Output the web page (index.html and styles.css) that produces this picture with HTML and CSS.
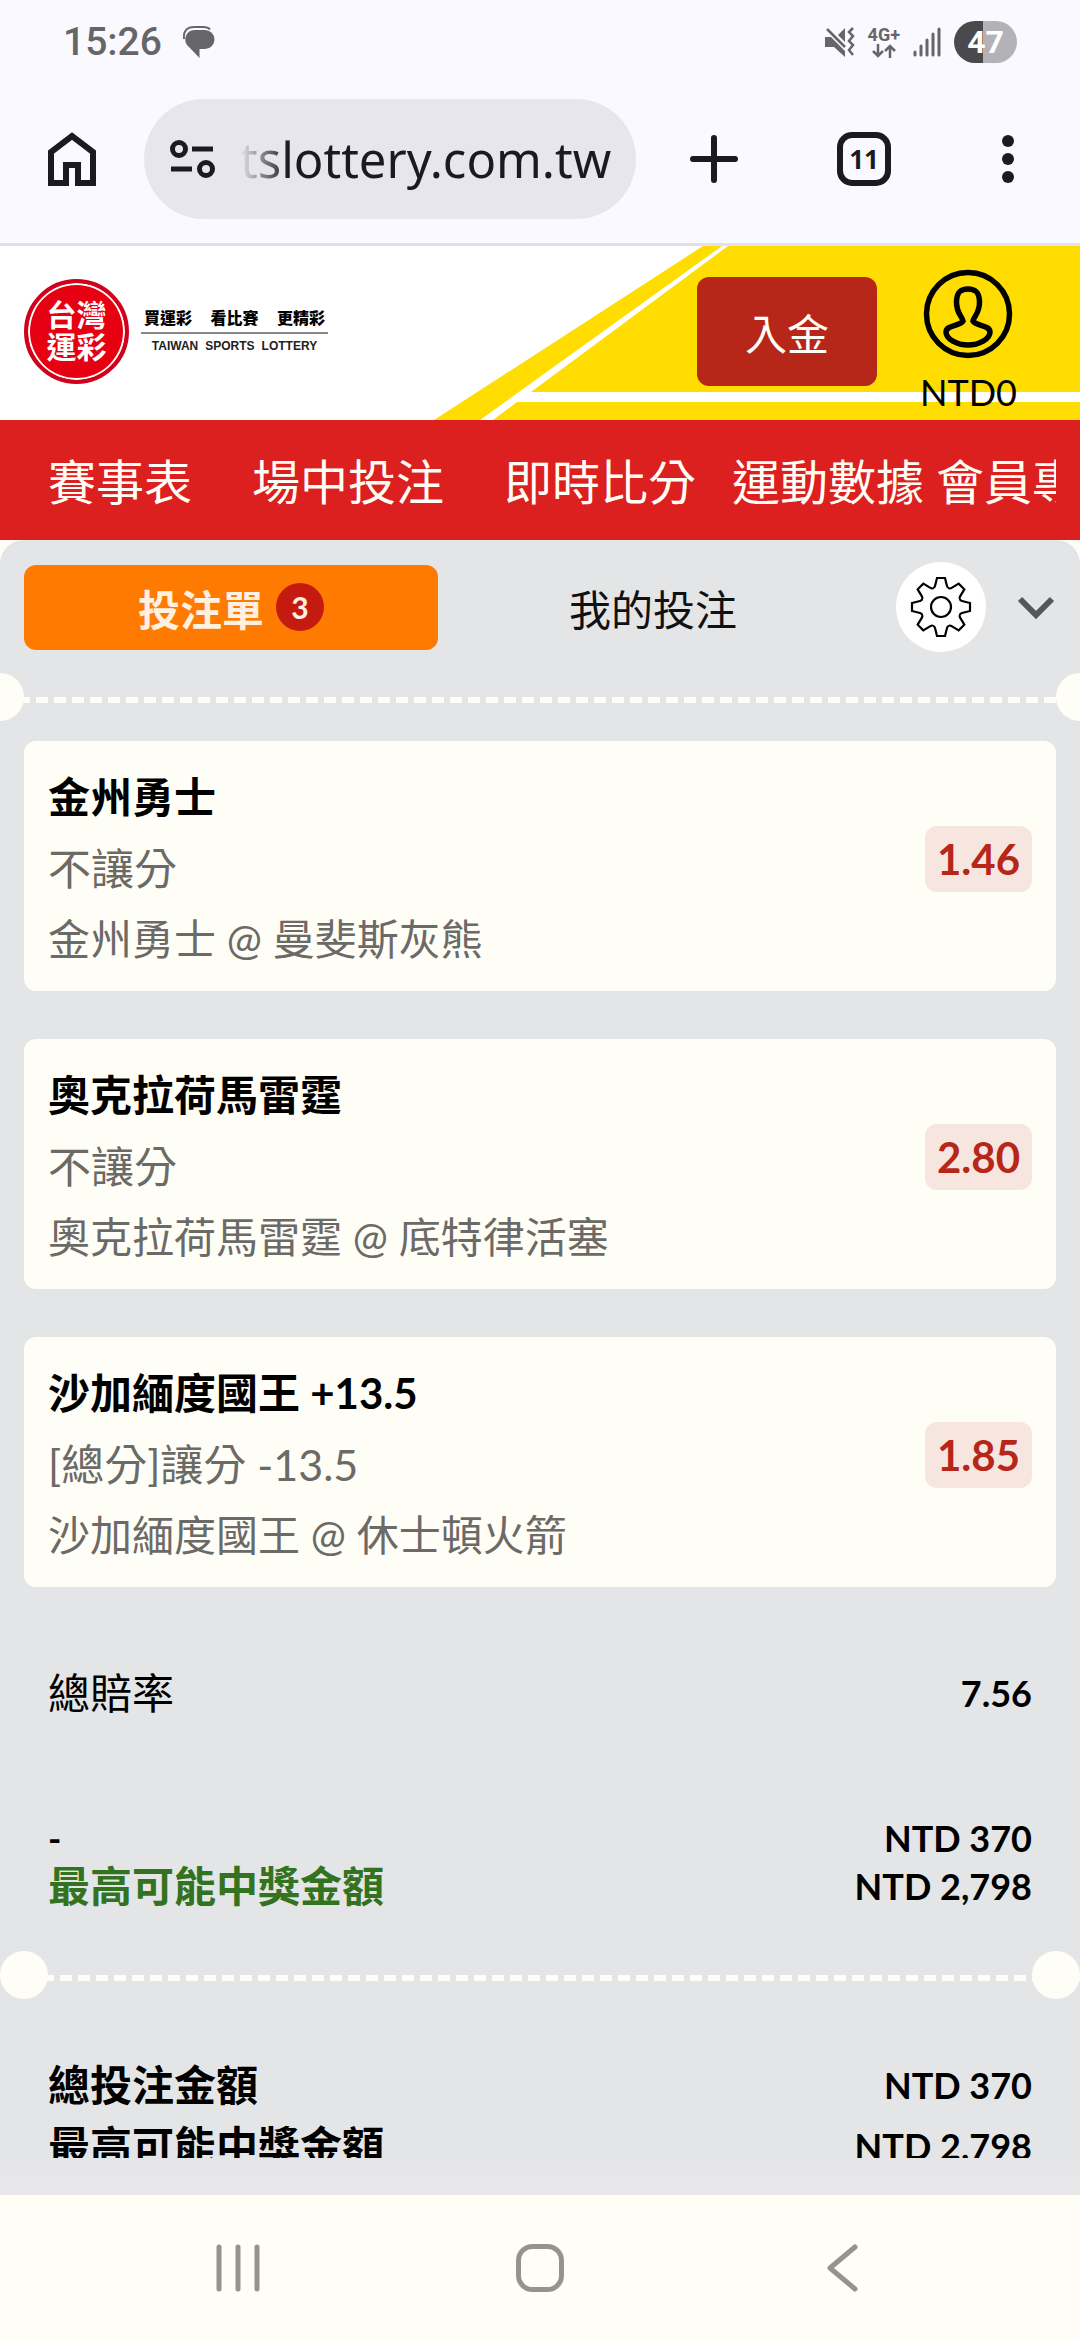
FILE: index.html
```html
<!DOCTYPE html>
<html lang="zh-Hant">

<head>
    <meta charset="UTF-8">
    <meta name="viewport" content="width=device-width, initial-scale=1.0">
    <title>台灣運彩 投注單</title>
    <link rel="stylesheet" href="styles.css">
</head>

<body>
    <!-- 系統狀態列 -->
    <div class="status-bar">
        <span class="time">15:26</span>
        <svg class="icon-message" viewBox="0 0 32 32" width="32" height="32">
            <path d="M12 4H22a9.500 9.500 0 0 1 0 19H16.500V32L6 21A9.500 9.500 0 0 1 12 4Z" fill="#666568" />
            <path d="M1 13C0 4 5 1 11 1H20Q25 1 27 3.500" fill="none" stroke="#666568" stroke-width="2" />
        </svg>
        <div class="status-icons">
            <svg viewBox="0 0 30 30" width="30" height="30">
                <path d="M0 10H6L20 24V30L9 20H0ZM13 8L20 1V15Z" fill="#666568" />
                <path d="M2 2L20 20M28 1L24 5L28 9L24 14L28 18L24 23L28 28" fill="none" stroke="#666568" stroke-width="2.500" />
            </svg>
            <div class="network">
                <span>4G+</span>
                <svg viewBox="0 0 24 14" width="24" height="14">
                    <path d="M6 0V12M1 7L6 12L11 7M18 14V2M13 7L18 2L23 7" fill="none" stroke="#666568" stroke-width="2.500" />
                </svg>
            </div>
            <svg class="signal" viewBox="0 0 28 30" width="28" height="30">
                <path d="M2 25V28M8 19V28M14 13V28M20 7V28M26 2V28" stroke="#666568" stroke-width="3" stroke-linecap="round" />
            </svg>
            <span class="battery">47</span>
        </div>
    </div>

    <!-- 瀏覽器工具列 -->
    <div class="toolbar">
        <button class="tool" aria-label="首頁">
            <svg viewBox="0 0 48 54" width="48" height="54">
                <path d="M3 51V20L24 4L45 20V51H30V33H18V51Z" fill="none" stroke="#1a1a1f" stroke-width="6" />
            </svg>
        </button>
        <div class="address">
            <svg viewBox="0 0 46 38" width="46" height="38">
                <g fill="none" stroke="#1a1a1f" stroke-width="5">
                    <circle cx="9" cy="9" r="6.500" />
                    <circle cx="36" cy="29" r="6.500" />
                    <path d="M22 9H43M1 29H22" />
                </g>
            </svg>
            <input class="url" type="text" value="tslottery.com.tw" aria-label="網址">
        </div>
        <button class="tool" aria-label="新分頁">
            <svg viewBox="0 0 48 48" width="48" height="48">
                <path d="M24 3V45M3 24H45" stroke="#1a1a1f" stroke-width="6" stroke-linecap="round" />
            </svg>
        </button>
        <button class="tool tabs" aria-label="分頁">11</button>
        <button class="tool" aria-label="選單">
            <svg viewBox="0 0 12 48" width="12" height="48">
                <g fill="#1a1a1f">
                    <circle cx="6" cy="6" r="6" />
                    <circle cx="6" cy="24" r="6" />
                    <circle cx="6" cy="42" r="6" />
                </g>
            </svg>
        </button>
    </div>

    <!-- 網站頁首 -->
    <header class="site-header">
        <!-- 黃色斜線背景 -->
        <svg class="header-bg" viewBox="0 0 646 174" width="646" height="174">
            <path d="M0 174L269 0H646V174Z" fill="#ffdd00" />
            <path d="M46 174L288 0H294L97 146H646V156H83L59 174Z" fill="#fff" />
        </svg>
        <a class="logo" href="#">
            <span class="logo-mark">台灣<br>運彩</span>
            <span class="logo-text">
                <span class="slogan"><span>買運彩</span><span>看比賽</span><span>更精彩</span></span>
                <span class="english"><span>TAIWAN</span><span>SPORTS</span><span>LOTTERY</span></span>
            </span>
        </a>
        <button class="deposit">入金</button>
        <a class="account" href="#">
            <svg viewBox="0 0 90 90" width="90" height="90">
                <g fill="none" stroke="#000" stroke-width="5.500">
                    <circle cx="45" cy="45" r="41.500" />
                    <path d="M40 52C39 47 33 44 33.500 32C34 22 39 20 45 20C51 20 56 22 56.500 32C57 44 51 47 50 52C53 57 67 56 67 63C67 70 56 76 45 76C34 76 23 70 23 63C23 56 37 57 40 52Z" />
                </g>
            </svg>
            <span>NTD0</span>
        </a>
    </header>

    <!-- 主選單 -->
    <nav class="main-nav">
        <div class="nav-list">
            <a href="#">賽事表</a>
            <a href="#">場中投注</a>
            <a href="#">即時比分</a>
            <a href="#">運動數據</a>
            <a href="#">會員專區</a>
        </div>
    </nav>

    <!-- 投注單 -->
    <main class="slip-wrap">
        <div class="slip">
            <div class="slip-head">
                <button class="tab active">投注單 <span class="count">3</span></button>
                <button class="tab">我的投注</button>
                <button class="gear" aria-label="設定">
                    <svg viewBox="-32 -32 64 64" width="64" height="64">
                        <defs>
                            <path id="tooth" d="M-8 -19Q-6.500 -19 -6 -21L-4 -29H4L6 -21Q6.500 -19 8 -19" />
                        </defs>
                        <g fill="none" stroke="#000" stroke-width="2.200">
                            <use href="#tooth" />
                            <use href="#tooth" transform="rotate(45)" />
                            <use href="#tooth" transform="rotate(90)" />
                            <use href="#tooth" transform="rotate(135)" />
                            <use href="#tooth" transform="rotate(180)" />
                            <use href="#tooth" transform="rotate(225)" />
                            <use href="#tooth" transform="rotate(270)" />
                            <use href="#tooth" transform="rotate(315)" />
                            <circle r="10" />
                        </g>
                    </svg>
                </button>
                <button class="collapse" aria-label="收合">
                    <svg viewBox="0 0 40 24" width="40" height="24">
                        <path d="M4 4L20 20L36 4" fill="none" stroke="#555759" stroke-width="6" />
                    </svg>
                </button>
            </div>

            <div class="divider outer"></div>

            <div class="bets">
                <article class="bet">
                    <div class="bet-info">
                        <h2>金州勇士</h2>
                        <p class="market">不讓分</p>
                        <p>金州勇士 @ 曼斐斯灰熊</p>
                    </div>
                    <span class="odds">1.46</span>
                </article>
                <article class="bet">
                    <div class="bet-info">
                        <h2>奧克拉荷馬雷霆</h2>
                        <p class="market">不讓分</p>
                        <p>奧克拉荷馬雷霆 @ 底特律活塞</p>
                    </div>
                    <span class="odds">2.80</span>
                </article>
                <article class="bet">
                    <div class="bet-info">
                        <h2>沙加緬度國王 +13.5</h2>
                        <p class="market">[總分]讓分 -13.5</p>
                        <p>沙加緬度國王 @ 休士頓火箭</p>
                    </div>
                    <span class="odds">1.85</span>
                </article>
            </div>

            <div class="row total-odds">
                <span>總賠率</span>
                <b>7.56</b>
            </div>
            <div class="stake">
                <div class="row"><b>-</b><b>NTD 370</b></div>
                <div class="row win"><span>最高可能中獎金額</span><b>NTD 2,798</b></div>
            </div>

            <div class="divider inner"></div>

            <div class="summary">
                <div class="row"><span>總投注金額</span><b>NTD 370</b></div>
                <div class="row"><span>最高可能中獎金額</span><b>NTD 2,798</b></div>
            </div>
        </div>
    </main>

    <!-- 系統導覽列 -->
    <div class="system-nav">
        <button aria-label="最近使用">
            <svg viewBox="0 0 48 48" width="48" height="48">
                <path d="M5 3V45M24 3V45M43 3V45" />
            </svg>
        </button>
        <button aria-label="主畫面">
            <svg viewBox="0 0 48 48" width="48" height="48">
                <rect x="2.500" y="2.500" width="43" height="43" rx="14" />
            </svg>
        </button>
        <button aria-label="返回">
            <svg viewBox="0 0 48 48" width="48" height="48">
                <path d="M37 3L12 24L37 45" />
            </svg>
        </button>
    </div>
</body>
</html>
```

FILE: styles.css
```css
* {
    box-sizing: border-box;
}

body {
    display: flex;
    flex-direction: column;
    height: 100vh;
    margin: 0;
    overflow: hidden;
    background-color: #faf9ff;
    color: #000;
    font-family: Lato, "Noto Sans CJK TC", sans-serif;
    font-size: 42px;
}

button {
    padding: 0;
    border: none;
    background: none;
    color: inherit;
    font-family: inherit;
    cursor: pointer;
}

a {
    color: inherit;
    text-decoration: none;
}

svg {
    display: block;
}

/* 系統狀態列 */
.status-bar {
    display: flex;
    flex: none;
    align-items: center;
    height: 84px;
    padding: 0 63px;
    color: #666568;
    font-family: Roboto, sans-serif;
}

.time {
    font-size: 39px;
    font-weight: 500;
}

.icon-message {
    margin-left: 21px;
}

.status-icons {
    display: flex;
    align-items: center;
    gap: 13px;
    margin-left: auto;
}

.network {
    display: flex;
    flex-direction: column;
    align-items: center;
    font-size: 18px;
    font-weight: 700;
    line-height: 18px;
}

.battery {
    width: 63px;
    height: 42px;
    border-radius: 21px;
    background: linear-gradient(90deg, #4a4a4c 46%, #b3b2b7 46%);
    color: #fff;
    font-size: 32px;
    font-weight: 700;
    line-height: 42px;
    text-align: center;
}

/* 瀏覽器工具列 */
.toolbar {
    display: flex;
    flex: none;
    align-items: center;
    height: 162px;
    padding: 0 66px 9px 48px;
    border-bottom: 3px solid #e2e1e9;
}

.tool {
    flex: none;
}

.address {
    display: flex;
    flex: 1;
    align-items: center;
    gap: 24px;
    min-width: 0;
    height: 120px;
    margin: 0 54px 0 48px;
    padding: 0 20px 0 26px;
    border-radius: 60px;
    background-color: #e7e6ed;
}

.address svg {
    flex: none;
}

.url {
    flex: 1;
    min-width: 0;
    padding: 0;
    border: none;
    outline: none;
    background: none;
    color: #1a1a1f;
    font-family: "Noto Sans", sans-serif;
    font-size: 49px;
    /* 網址左側淡出 */
    -webkit-mask-image: linear-gradient(90deg, transparent, #000 48px);
    mask-image: linear-gradient(90deg, transparent, #000 48px);
}

.tabs {
    width: 54px;
    height: 54px;
    margin: 0 111px 0 99px;
    border: 6px solid #1a1a1f;
    border-radius: 15px;
    color: #1a1a1f;
    font-family: "Noto Sans", sans-serif;
    font-size: 26px;
    font-weight: 700;
    line-height: 42px;
}

/* 網站頁首 */
.site-header {
    position: relative;
    display: flex;
    flex: none;
    align-items: flex-start;
    height: 174px;
    padding: 0 63px 0 24px;
    overflow: hidden;
    background-color: #fff;
}

.header-bg {
    position: absolute;
    top: 0;
    right: 0;
}

.logo {
    display: flex;
    align-items: center;
    gap: 12px;
    margin-top: 33px;
}

.logo-mark {
    width: 105px;
    height: 105px;
    padding-top: 15px;
    border: 4px solid #d0021b;
    border-radius: 50%;
    background-color: #e60012;
    box-shadow: inset 0 0 0 2px #fff;
    color: #fff;
    font-size: 30px;
    font-weight: 700;
    line-height: 32px;
    text-align: center;
}

.logo-text {
    width: 187px;
}

.slogan {
    display: flex;
    justify-content: space-between;
    padding: 0 3px 2px;
    border-bottom: 2px solid #888;
    font-size: 16px;
    font-weight: 900;
    line-height: 24px;
}

.english {
    display: flex;
    justify-content: center;
    gap: 7px;
    color: #222;
    font-family: "Liberation Sans", sans-serif;
    font-size: 12px;
    font-weight: 700;
    line-height: 24px;
}

.deposit {
    position: relative;
    width: 180px;
    height: 109px;
    margin: 31px 43px 0 auto;
    border-radius: 12px;
    background-color: #b62619;
    color: #fffdf5;
    font-size: 42px;
}

.account {
    position: relative;
    display: flex;
    flex-direction: column;
    align-items: center;
    padding-top: 23px;
    font-size: 36px;
    line-height: 66px;
}

/* 主選單 */
.main-nav {
    flex: none;
    padding: 4px 24px 0;
    background-color: #dc1f1f;
    color: #fffdf5;
}

.nav-list {
    display: flex;
    gap: 12px;
    padding-left: 24px;
    overflow: hidden;
    font-size: 48px;
    line-height: 116px;
    white-space: nowrap;
}

.nav-list a:nth-child(-n+2) {
    padding-right: 48px;
}

.nav-list a:nth-child(3) {
    padding-right: 24px;
}

/* 投注單外框 */
.slip-wrap {
    display: flex;
    flex: 1;
    flex-direction: column;
    min-height: 0;
    background-color: #fffef6;
}

.slip-wrap::after {
    content: "";
    flex: none;
    height: 37px;
    background: linear-gradient(#e4e5e7, #e9e9eb);
}

.slip {
    flex: 1;
    min-height: 0;
    overflow: hidden;
    border-radius: 24px 24px 0 0;
    background-color: #e4e5e7;
}

.slip-head {
    display: flex;
    align-items: center;
    padding: 22px 24px 21px;
}

.tab {
    display: flex;
    flex: 1;
    align-items: center;
    justify-content: center;
    gap: 12px;
    height: 85px;
    margin-right: 8px;
    border-radius: 12px;
    color: #111;
    font-size: 42px;
}

.tab.active {
    background-color: #ff7a00;
    color: #fff1e0;
    font-weight: 700;
}

.count {
    width: 48px;
    height: 48px;
    border-radius: 50%;
    background-color: #c51a10;
    font-size: 30px;
    line-height: 48px;
}

.gear {
    display: flex;
    align-items: center;
    justify-content: center;
    width: 90px;
    height: 90px;
    margin: 0 30px 0 28px;
    border-radius: 50%;
    background-color: #fff;
}

/* 票券虛線 */
.divider {
    position: relative;
    height: 48px;
    background: repeating-linear-gradient(90deg, #fffef6 0 12px, transparent 12px 18px) 0 24px / 100% 6px no-repeat;
}

.divider::before,
.divider::after {
    content: "";
    position: absolute;
    width: 48px;
    height: 48px;
    border-radius: 50%;
    background-color: #fffef6;
}

.divider::before {
    left: 0;
}

.divider::after {
    right: 0;
}

.divider.outer::before {
    left: -24px;
}

.divider.outer::after {
    right: -24px;
}

.divider.inner {
    background-position: 24px 24px;
}

/* 投注項目 */
.bets {
    display: flex;
    flex-direction: column;
    gap: 48px;
    padding: 20px 24px 0;
}

.bet {
    display: flex;
    align-items: center;
    justify-content: space-between;
    height: 250px;
    padding: 5px 24px 0;
    border-radius: 12px;
    background-color: #fffef6;
    line-height: 71px;
}

.bet h2 {
    margin: 0;
    font-size: 42px;
    font-weight: 700;
}

.bet p {
    margin: 0;
    color: #6c6a66;
}

.bet .market {
    font-size: 43px;
}

.odds {
    padding: 0 12px;
    margin-bottom: 19px;
    border-radius: 12px;
    background-color: #f7e6e0;
    color: #b62619;
    font-weight: 700;
    line-height: 66px;
}

/* 金額列 */
.row {
    display: flex;
    align-items: center;
    justify-content: space-between;
    padding: 0 48px;
    line-height: 48px;
}

.row b {
    font-size: 36px;
    font-weight: 700;
}

.total-odds {
    padding-top: 82px;
}

.stake {
    padding: 97px 0 41px;
}

.win span {
    color: #33731f;
    font-weight: 700;
}

.summary {
    padding-top: 56px;
    font-weight: 700;
}

.summary .row {
    line-height: 61px;
}

/* 系統導覽列 */
.system-nav {
    display: flex;
    flex: none;
    align-items: center;
    justify-content: center;
    gap: 254px;
    height: 145px;
    background-color: #fffdf6;
}

.system-nav svg {
    fill: none;
    stroke: #949390;
    stroke-width: 5;
    stroke-linecap: round;
    stroke-linejoin: round;
}
```
